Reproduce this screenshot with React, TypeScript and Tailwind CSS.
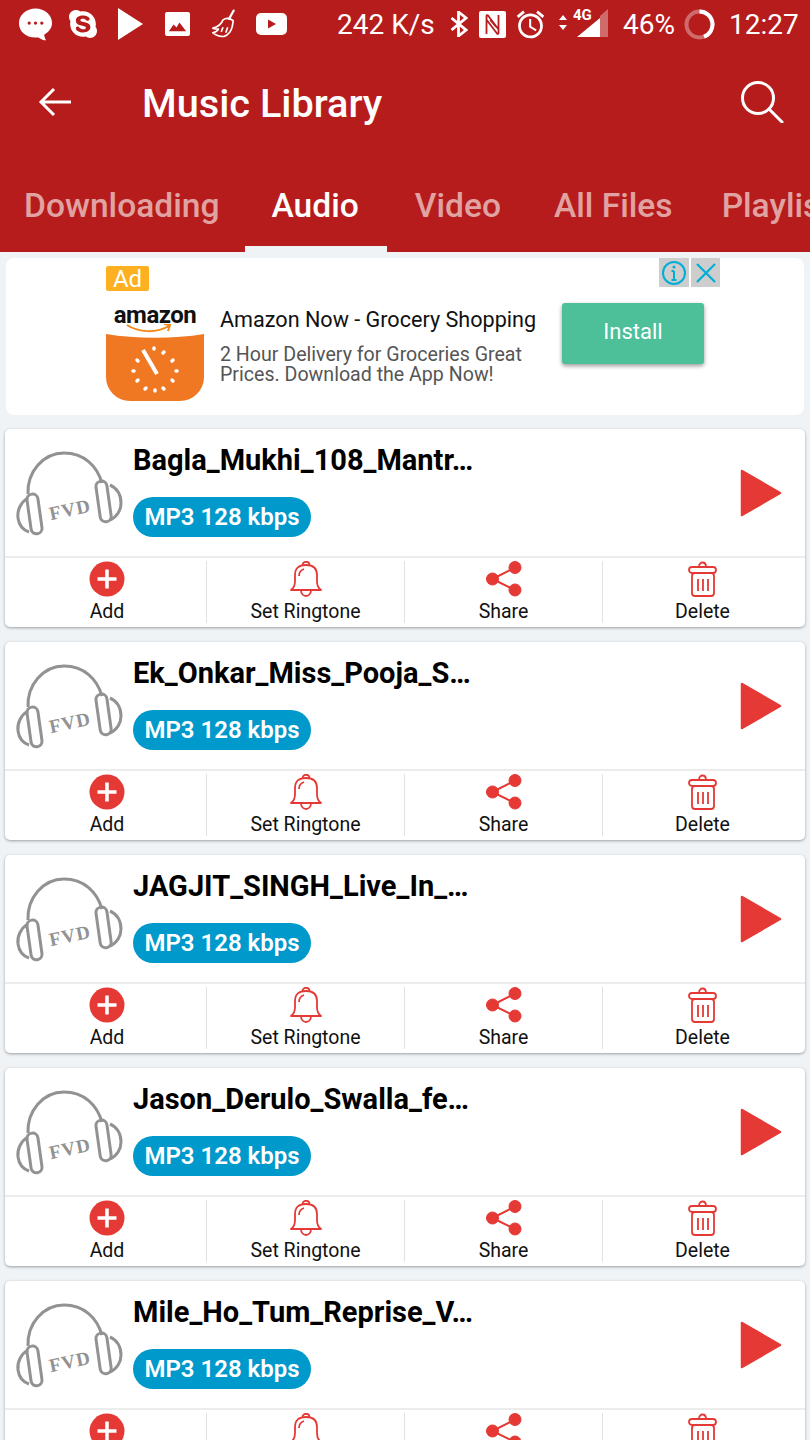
import { FaSkype } from "react-icons/fa";
import { MdAccessAlarm } from "react-icons/md";

const songs = [
  "Bagla_Mukhi_108_Mantr…",
  "Ek_Onkar_Miss_Pooja_S…",
  "JAGJIT_SINGH_Live_In_…",
  "Jason_Derulo_Swalla_fe…",
  "Mile_Ho_Tum_Reprise_V…",
];

const tabs = [
  { label: "Downloading", cls: "ml-[24px] text-white/60" },
  { label: "Audio", cls: "relative ml-[52px] text-white" },
  { label: "Video", cls: "ml-[56px] text-white/60" },
  { label: "All Files", cls: "ml-[53px] text-white/60" },
  { label: "Playlists", cls: "ml-[49px] text-white/60" },
];

function StatusBar() {
  return (
    <div className="flex h-[48px] items-center pl-[18px] text-[28px] text-white">
      <svg width="35" height="34" viewBox="0 0 36 34" className="mr-[14px]">
        <path d="M18 1C8.500 1 1 7.600 1 16c0 8.400 6.500 15 17 15 1 0 2 0 3-.2 2 1.600 5 2.900 8 3-1-1.400-2-3.400-2-6 5-2.500 8-7 8-11.800C35 7.600 27.500 1 18 1z" fill="#fff" />
        <circle cx="11.500" cy="16" r="1.700" fill="#b71c1c" />
        <circle cx="18" cy="16" r="1.700" fill="#b71c1c" />
        <circle cx="24.500" cy="16" r="1.700" fill="#b71c1c" />
      </svg>
      <FaSkype size={32} className="mr-[19px]" />
      <svg width="25" height="32" viewBox="0 0 25 32" className="mr-[22px]">
        <path d="M0 0l25 16L0 32z" fill="#fff" />
      </svg>
      <svg width="25" height="25" viewBox="0 0 26 26" className="mr-[21px]">
        <rect width="26" height="25" rx="2" fill="#fff" />
        <path d="M4 20l5-7 3 3 3-5 7 9z" fill="#b71c1c" />
      </svg>
      <svg width="25" height="30" viewBox="0 0 27 31" className="mr-[20px]" fill="none" stroke="#fff" strokeWidth="1.800">
        <path d="M24.500 1l-5 9" strokeWidth="2.400" strokeLinecap="round" />
        <path d="M13 11c3-2 7-2 11 1l-1 6c-1 5-4 9-9 11-4 0-8-1-12-4 4-1 5-2 6-4-2 0-4 0-6-1 4-1 9-4 11-9z" strokeLinejoin="round" />
        <path d="M13 19l-2 5M18 19l-2 6" />
      </svg>
      <svg width="31" height="22" viewBox="0 0 31 22" className="mr-[50px]">
        <rect width="31" height="22" rx="5" fill="#fff" />
        <path d="M12 6.500l8 4.500-8 4.500z" fill="#b71c1c" />
      </svg>
      <span className="mt-[2px] w-[113px]">242 K/s</span>
      <svg width="18" height="26" viewBox="0 0 18 26" className="mr-[11px]" fill="none" stroke="#fff" strokeWidth="2.800">
        <path d="M1.500 7L16 19l-7.500 6V1L16 7 1.500 19" />
      </svg>
      <svg width="27" height="27" viewBox="0 0 27 27" className="mr-[8px]">
        <rect width="27" height="27" rx="2" fill="#fff" />
        <path d="M7.500 23V5c0-1 1-1 1.500-.5L20 19M19.500 4v18c0 1-1 1-1.500.5L7 8" fill="none" stroke="#b71c1c" strokeWidth="1.800" />
        <path d="M11 9l6 7" fill="none" stroke="#b71c1c" strokeWidth="1.200" />
      </svg>
      <MdAccessAlarm size={33} className="mr-[11px]" />
      <svg width="50" height="30" viewBox="0 0 50 30" className="mr-[15px] mt-[-4px]">
        <path d="M1 13l4-5 4 5zM1 18l4 5 4-5z" fill="#fff" />
        <text x="15" y="13" fontSize="15" fontWeight="700" fill="#fff" fontFamily="Roboto, sans-serif">4G</text>
        <path d="M19 30L42 11v19z" fill="#fff" />
        <path d="M42 9l8-7v28h-8z" fill="#fff" fillOpacity="0.35" />
      </svg>
      <span className="mt-[2px] w-[61px]">46%</span>
      <svg width="31" height="31" viewBox="0 0 31 31" className="mr-[14px]" fill="none" strokeWidth="4">
        <circle cx="15.500" cy="15.500" r="13" stroke="#fff" strokeOpacity="0.35" />
        <path d="M15.500 2.500A13 13 0 0 1 20 27.700" stroke="#fff" />
      </svg>
      <span className="mt-[2px]">12:27</span>
    </div>
  );
}

function Toolbar() {
  return (
    <div className="flex h-[112px] items-center text-white">
      <svg width="34" height="30" viewBox="0 0 34 30" className="ml-[38px] mt-[-4px]" fill="none" stroke="#fff" strokeWidth="3">
        <path d="M33 15H3M16 2L3 15l13 13" />
      </svg>
      <h1 className="ml-[70px] text-[39.700px] font-medium">Music Library</h1>
      <svg width="44" height="42" viewBox="0 0 44 42" className="ml-auto mr-[26px] mt-[-4px]" fill="none" stroke="#fff" strokeWidth="3">
        <circle cx="18" cy="17" r="15.500" />
        <path d="M29 28l13 13" strokeLinecap="round" />
      </svg>
    </div>
  );
}

function Tabs() {
  return (
    <div className="flex h-[92px] items-center overflow-hidden whitespace-nowrap text-[33.600px] font-medium">
      {tabs.map((t) => (
        <div key={t.label} className={t.cls}>
          {t.label}
          {t.label === "Audio" && (
            <div className="absolute bottom-[-21px] left-[-27px] right-[-28px] h-[6px] bg-[#eff3f6]" />
          )}
        </div>
      ))}
    </div>
  );
}

function AdCard() {
  return (
    <div className="relative mx-[6px] mt-[6px] h-[157px] shrink-0 rounded-[8px] bg-white pl-[100px] pt-[8px]">
      <div className="flex h-[25px] w-[43px] items-center justify-center rounded-[2px] bg-[#fdb022] text-[24px] leading-none text-white">Ad</div>
      <div className="flex">
        <div className="mt-[3px] w-[98px]">
          <div className="relative h-[40px] text-center text-[24px] font-bold leading-[42px] tracking-[-0.5px] text-[#111]">
            amazon
            <svg width="46" height="10" viewBox="0 0 46 10" className="absolute left-[20px] top-[30px]" fill="none" stroke="#f08a1d" strokeWidth="2">
              <path d="M1 1c12 8 30 8 42 1M38 0l6 1-2 6" />
            </svg>
          </div>
          <div className="relative h-[67px] w-[98px] rounded-b-[24px] bg-[#f07823]">
            <svg width="98" height="67" viewBox="0 0 98 67" className="absolute left-0 top-0">
              <path d="M0 0c30 5 68 5 98 0V-2H0z" fill="#fff" />
              <g stroke="#fff" strokeWidth="4" strokeLinecap="round">
                <path d="M37 16l14 24" strokeLinecap="butt" />
                <path d="M48 14v1M58 18l-1 1M67 26l-1 1M71 37h-1M67 47l-1-1M58 55l-1-1M49 57v-1M39 55l1-1M31 47l1-1M27 37h1M31 26l1 1" strokeWidth="3.500" />
              </g>
            </svg>
          </div>
        </div>
        <div className="ml-[16px] mt-[15px] w-[330px]">
          <div className="text-[21.600px] leading-[28px] text-[#111]">Amazon Now - Grocery Shopping</div>
          <div className="mt-[11px] text-[19.600px] leading-[20px] text-[#555]">
            2 Hour Delivery for Groceries Great
            <br />
            Prices. Download the App Now!
          </div>
        </div>
        <div className="ml-[12px] mt-[12px] flex h-[61px] w-[142px] items-center justify-center rounded-[3px] bg-[#4dbf99] pb-[4px] text-[22px] text-white shadow-[0_2px_4px_rgba(0,0,0,0.4)]">
          Install
        </div>
      </div>
      <div className="absolute left-[653px] top-0 flex gap-[2px]">
        <div className="flex h-[29px] w-[30px] items-center justify-center bg-[#cdcdcd]">
          <svg width="26" height="26" viewBox="0 0 26 26" fill="none" stroke="#00aed6" strokeWidth="2">
            <circle cx="13" cy="13" r="11" />
            <path d="M13 11v9M10.500 11H13M10.500 20h5" />
            <circle cx="13" cy="7" r="1.500" fill="#00aed6" stroke="none" />
          </svg>
        </div>
        <div className="flex h-[29px] w-[29px] items-center justify-center bg-[#cdcdcd]">
          <svg width="20" height="20" viewBox="0 0 20 20" fill="none" stroke="#00aed6" strokeWidth="2.200">
            <path d="M1 1l18 18M19 1L1 19" />
          </svg>
        </div>
      </div>
    </div>
  );
}

function Headphones() {
  return (
    <svg width="110" height="90" viewBox="0 0 110 90" className="ml-[10px] mt-[21px] shrink-0" fill="none" stroke="#929292" strokeWidth="3">
      <path d="M13 44C12 22 28 3 49 3c20 0 33 13 38 30" />
      <rect x="14" y="44" width="11" height="40" rx="5.500" transform="rotate(-8 19 64)" />
      <path d="M13 48C6 52 2 60 3 68c1 7 5 12 11 14" />
      <rect x="83" y="31" width="11" height="41" rx="5.500" transform="rotate(-8 88 51)" />
      <path d="M95 35c7 3 11 10 11 18 0 7-4 14-11 17" />
      <text x="34" y="66" fontFamily="Liberation Serif, serif" fontWeight="700" fontSize="19" letterSpacing="1" fill="#929292" stroke="none" transform="rotate(-12 55 60)">FVD</text>
    </svg>
  );
}

function ActionItem({ label, icon, cls }: { label: string; icon: React.ReactNode; cls: string }) {
  return (
    <div className={cls}>
      <div className="flex h-[36px] items-center justify-center">{icon}</div>
      <div className="mt-[2px] text-[19.500px] leading-[26px] text-[#111]">{label}</div>
    </div>
  );
}

function SongCard({ title }: { title: string }) {
  return (
    <div className="mx-[5px] h-[198px] shrink-0 rounded-[5px] bg-white shadow-[0_1px_3px_rgba(0,0,0,0.35)]">
      <div className="flex h-[129px] border-b-2 border-[#ececec]">
        <Headphones />
        <div className="ml-[8px] min-w-0">
          <div className="mt-[12px] h-[38px] text-[29px] font-bold leading-[38px] text-black">{title}</div>
          <div className="mt-[18px] flex h-[40px] w-[178px] items-center justify-center rounded-full bg-[#0099cc] text-[24px] font-semibold text-white">
            MP3 128 kbps
          </div>
        </div>
        <svg width="42" height="48" viewBox="0 0 42 48" className="ml-auto mr-[23px] mt-[40px] shrink-0">
          <path d="M2 2l38 22L2 46z" fill="#e53935" stroke="#e53935" strokeWidth="2.500" strokeLinejoin="round" />
        </svg>
      </div>
      <div className="flex h-[65px] pt-[3px] text-center">
        <ActionItem
          cls="flex w-[202px] flex-col items-center border-r border-[#e2e2e2] pl-[3px]"
          label="Add"
          icon={
            <svg width="36" height="36" viewBox="0 0 36 36">
              <circle cx="18" cy="18" r="17.500" fill="#e53935" />
              <path d="M18 8.500v19M8.500 18h19" stroke="#fff" strokeWidth="3.500" />
            </svg>
          }
        />
        <ActionItem
          cls="flex w-[198px] flex-col items-center border-r border-[#e2e2e2]"
          label="Set Ringtone"
          icon={
            <svg width="32" height="36" viewBox="0 0 32 36" fill="none" stroke="#e53935" strokeWidth="1.800">
              <path d="M1 29c3-2 4-5 4-9v-6C5 7 9 4 16 4s11 3 11 10v6c0 4 1 7 4 9z" strokeLinejoin="round" />
              <path d="M12.500 4.500c0-5 7-5 7 0M11 29c0 8 10 8 10 0M9 15c0-3 2-6 5-7" />
            </svg>
          }
        />
        <ActionItem
          cls="flex w-[198px] flex-col items-center border-r border-[#e2e2e2]"
          label="Share"
          icon={
            <svg width="36" height="36" viewBox="0 0 36 36" fill="#e53935" stroke="#e53935">
              <circle cx="6.500" cy="18" r="6" />
              <circle cx="29" cy="6.500" r="6" />
              <circle cx="29" cy="29" r="6" />
              <path d="M6.500 18L29 6.500M6.500 18L29 29" strokeWidth="2" fill="none" />
            </svg>
          }
        />
        <ActionItem
          cls="flex flex-1 flex-col items-center pr-[3px]"
          label="Delete"
          icon={
            <svg width="30" height="36" viewBox="0 0 30 36" fill="none" stroke="#e53935" strokeWidth="1.800">
              <rect x="1" y="6" width="27" height="6" rx="3" />
              <rect x="4" y="12" width="22" height="23" rx="3" />
              <path d="M11 6c0-6 7-6 7 0M10 18v12M15 18v12M20 18v12" />
            </svg>
          }
        />
      </div>
    </div>
  );
}

export default function App() {
  return (
    <div className="flex h-[1440px] w-[810px] flex-col overflow-hidden bg-[#eff3f6] font-['Roboto',sans-serif]">
      <div className="h-[252px] shrink-0 bg-[#b71c1c]">
        <StatusBar />
        <Toolbar />
        <Tabs />
      </div>
      <AdCard />
      <div className="flex flex-col gap-[15px] pt-[14px]">
        {songs.map((s) => (
          <SongCard key={s} title={s} />
        ))}
      </div>
    </div>
  );
}
